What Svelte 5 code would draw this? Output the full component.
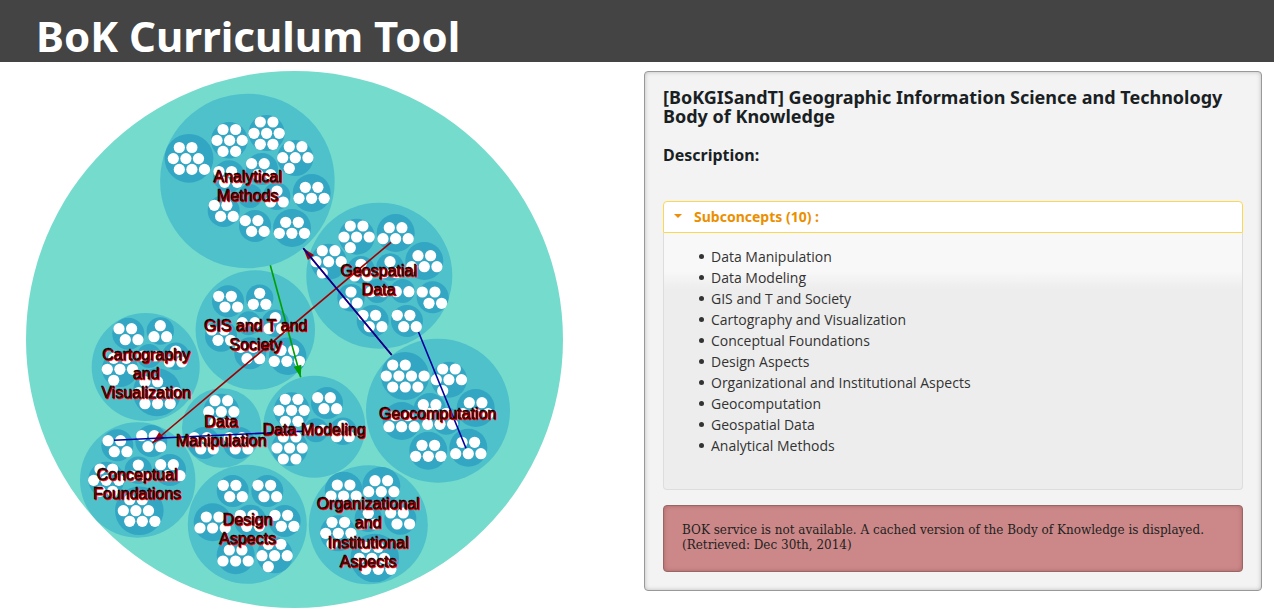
<script>
  let open = $state(true);

  const STEP = 12.6;

  // Each concept: centre, radius, label lines with the first baseline,
  // and its children as [x, y, r, rows]; a row is [x of first dot, y, count].
  const concepts = [
    { x: 247.4, y: 181, r: 87.3, lx: 247.5, ly: 181.5, label: ['Analytical', 'Methods'], subs: [
      [189, 158.3, 24.4, [[179.3, 147.5, 2], [173.3, 158.6, 3], [179.3, 169.4, 3]]],
      [229.3, 140.3, 18.3, [[223, 129.5, 2], [217, 140.4, 3], [223, 151.4, 2]]],
      [266.6, 133, 18, [[260.3, 122, 2], [254, 133.3, 3], [260.3, 144.3, 2]]],
      [295.3, 158, 18, [[289.3, 146.7, 2], [282.7, 157.7, 3], [289.3, 168.3, 1]]],
      [311.7, 193, 19, [[305.3, 187.3, 2], [299, 198.3, 3]]],
      [292, 228, 19, [[285.7, 222.3, 2], [279.3, 233.3, 3]]],
      [255, 226, 16, [[245.3, 220.6, 2], [251.6, 231.4, 2]]],
      [223.7, 211, 16, [[214.3, 205.3, 2], [220.6, 216.4, 2]]],
      [229, 176.3, 16, [[219, 171.5, 2], [224.6, 182.3, 2]]],
      [262, 169, 16, [[251.6, 163.6, 2], [258, 174.5, 2]]],
      [276.7, 196.3, 13.7, [[277, 191, 1], [270.6, 202, 2]]],
      [250, 196, 12, []]
    ] },
    { x: 255.3, y: 330, r: 59.7, lx: 255.5, ly: 330.5, label: ['GIS and T and', 'Society'], subs: [
      [228, 301.3, 16, [[218.7, 296.3, 2], [225, 307, 2]]],
      [259.7, 298.3, 13.7, [[259.7, 293.3, 1], [253.3, 304.3, 2]]],
      [275.3, 323.3, 13.7, [[275.3, 317.7, 1], [269, 328.7, 2]]],
      [248.7, 323.3, 12, [[242.3, 322.7, 2]]],
      [221, 335.7, 16, [[211.7, 330, 2], [218, 340.3, 2]]],
      [250.3, 353.3, 16, [[240.7, 347.3, 2], [247, 358.7, 2]]],
      [287.7, 356.3, 18.7, [[281, 350.3, 2], [274.3, 361.3, 3]]]
    ] },
    { x: 379.3, y: 275.7, r: 73, lx: 378.5, ly: 276, label: ['Geospatial', 'Data'], subs: [
      [356.7, 236.7, 18, [[350.3, 226, 2], [344, 237, 3], [350.3, 247.7, 1]]],
      [395.7, 233, 19, [[389.3, 227.7, 2], [383, 238.7, 3]]],
      [424.3, 261, 19, [[418, 255.7, 2], [411.7, 266.7, 3]]],
      [328.7, 261.7, 18, [[322.3, 250.7, 2], [316, 261.7, 3], [322.3, 273, 1]]],
      [432.7, 297.3, 16, [[422.3, 292, 2], [429, 303.3, 2]]],
      [407, 321, 16, [[397.3, 315.3, 2], [403.7, 326.7, 2]]],
      [372.7, 321, 16, [[363, 315.3, 2], [369.3, 326.7, 2]]],
      [351, 297.7, 13.7, [[351, 292, 1], [344.7, 303, 2]]],
      [361, 269.7, 13.7, [[361, 264.3, 1], [354.7, 276, 2]]],
      [390, 267, 13.7, [[390, 261.7, 1], [383.7, 272.7, 2]]],
      [402.7, 291, 12, [[396.3, 291.7, 2]]],
      [377.3, 291, 12, [[371, 291.7, 2]]]
    ] },
    { x: 145.7, y: 367, r: 54, lx: 146, ly: 359.5, label: ['Cartography', 'and', 'Visualization'], subs: [
      [128.3, 333.7, 16, [[119, 328.7, 2], [125.3, 339.7, 2]]],
      [160.3, 331, 13.7, [[160.3, 325.7, 1], [154, 336.7, 2]]],
      [175.7, 356.3, 13.7, [[175.7, 351, 1], [169.3, 362, 2]]],
      [149, 356, 12, [[142.7, 356, 2]]],
      [120, 369, 18, [[113.7, 358.3, 2], [107.3, 369.3, 3], [113.7, 380.3, 1]]],
      [157, 392.3, 24, [[145, 381.7, 2], [138.7, 392.7, 4], [145, 403.7, 3]]]
    ] },
    { x: 438, y: 410.7, r: 72, lx: 437.5, ly: 419, label: ['Geocomputation'], subs: [
      [405, 376, 24, [[392.7, 365, 2], [386.3, 376, 4], [392.7, 387, 3]]],
      [449, 379.7, 18, [[442.7, 369, 2], [436.3, 379.7, 3], [442.7, 390.7, 1]]],
      [475.7, 408, 19, [[469.3, 402.7, 2], [463, 413.7, 3]]],
      [468.3, 447.7, 19, [[462, 442.3, 2], [455.7, 453.7, 3]]],
      [428.3, 450.7, 19, [[422, 445.3, 2], [415.7, 456.3, 3]]],
      [401.7, 421, 19, [[395.3, 415.7, 2], [389, 426.7, 3]]],
      [429.7, 409, 16, [[423.3, 404.7, 2], [429.6, 413.3, 2], [427.7, 424.3, 1]]],
      [446.3, 421, 13.7, [[446.3, 413.3, 1], [440, 424.3, 2]]]
    ] },
    { x: 221.7, y: 428, r: 39.7, lx: 221, ly: 427, label: ['Data', 'Manipulation'], subs: [
      [221.3, 411.7, 18, [[215, 400.7, 2], [208.7, 411.7, 3], [215, 422.7, 2]]],
      [204, 443, 16, [[194.3, 437.7, 2], [200.7, 449, 2]]],
      [239, 443, 16, [[229.3, 437.7, 2], [235.3, 449, 2]]]
    ] },
    { x: 314.3, y: 426.7, r: 51, lx: 314, ly: 435, label: ['Data Modeling'], subs: [
      [291.7, 410.3, 18, [[285.3, 399.3, 2], [279, 410.3, 3], [285.3, 421.3, 2]]],
      [327, 403, 16, [[317.7, 397.7, 2], [324, 408.7, 2]]],
      [343, 431.3, 13.7, [[343, 425.5, 1], [336.7, 436.7, 2]]],
      [316, 430.3, 12, [[309.7, 430, 2]]],
      [289.7, 448, 18, [[283.3, 437, 2], [277, 448, 3], [283.3, 459, 2]]]
    ] },
    { x: 137.7, y: 480, r: 57.7, lx: 137, ly: 480, label: ['Conceptual', 'Foundations'], subs: [
      [117.3, 445.3, 16, [[108, 440.7, 2], [114.3, 451.7, 2]]],
      [151.3, 441, 16, [[141.7, 435.7, 2], [148, 446.7, 2]]],
      [138.3, 470.3, 13.7, [[138.3, 465, 1], [132, 476, 2]]],
      [170, 470, 16, [[160.7, 464.7, 2], [167.3, 475.7, 2]]],
      [106.3, 479.7, 18, [[100, 469, 2], [93.7, 480.3, 3], [100, 491.3, 2]]],
      [139.3, 510.7, 24.3, [[129.7, 499.7, 2], [123.3, 510.7, 3], [129.7, 521.3, 3]]]
    ] },
    { x: 247.3, y: 524.3, r: 59.5, lx: 247.5, ly: 525, label: ['Design', 'Aspects'], subs: [
      [232.7, 491, 16, [[223.3, 485.3, 2], [229.7, 496.7, 2]]],
      [267.3, 491, 16, [[258, 485.3, 2], [264, 496.7, 2]]],
      [212.7, 522.3, 19, [[206.3, 517, 2], [200, 528, 3]]],
      [284.7, 521, 16, [[275, 515.3, 2], [281.3, 526.3, 2]]],
      [250.3, 520.7, 16, [[240.3, 515.3, 2], [246.7, 526.3, 2]]],
      [235.7, 555.3, 19, [[229.3, 550, 2], [223, 561, 3]]],
      [274.7, 555.3, 18, [[268.3, 544.3, 2], [262, 555.7, 3], [268.3, 566.7, 1]]]
    ] },
    { x: 368.3, y: 524.7, r: 59.5, lx: 368, ly: 509, label: ['Organizational', 'and', 'Institutional', 'Aspects'], subs: [
      [343.7, 490.7, 19, [[337.3, 485, 2], [331, 496, 3]]],
      [381.3, 486, 19, [[375, 480.7, 2], [368.7, 491.7, 3]]],
      [400.3, 518.7, 16, [[390.7, 513, 2], [397, 524, 2]]],
      [368.3, 518.3, 13.7, [[368.3, 513.3, 1], [362, 524, 2]]],
      [338, 533.3, 18, [[332, 522.3, 2], [325.7, 533.3, 3], [332, 544, 1]]],
      [374.7, 558, 24.3, [[365.7, 547.3, 2], [359.3, 558.3, 3], [365.7, 569.3, 3]]]
    ] }
  ];

  const links = [
    { kind: 'similar', x1: 270.3, y1: 265.3, x2: 300.7, y2: 377.3, head: true },
    { kind: 'prereq', x1: 391, y1: 242.3, x2: 152.5, y2: 443, head: true },
    { kind: 'prereq', x1: 391.7, y1: 355, x2: 303.3, y2: 248.3, head: true },
    { kind: 'related', x1: 391.7, y1: 355, x2: 303.3, y2: 248.3 },
    { kind: 'related', x1: 418.5, y1: 332, x2: 466, y2: 448.3 },
    { kind: 'related', x1: 114, y1: 440.3, x2: 303, y2: 431.3 }
  ];

  function head({ x1, y1, x2, y2 }) {
    const d = Math.hypot(x2 - x1, y2 - y1);
    const ux = (x2 - x1) / d;
    const uy = (y2 - y1) / d;
    const bx = x2 - ux * 12;
    const by = y2 - uy * 12;
    return `${x2},${y2} ${bx - uy * 4},${by + ux * 4} ${bx + uy * 4},${by - ux * 4}`;
  }

  const subconcepts = [
    'Data Manipulation',
    'Data Modeling',
    'GIS and T and Society',
    'Cartography and Visualization',
    'Conceptual Foundations',
    'Design Aspects',
    'Organizational and Institutional Aspects',
    'Geocomputation',
    'Geospatial Data',
    'Analytical Methods'
  ];
</script>

<header>
  <h1>BoK Curriculum Tool</h1>
</header>

<main>
  <section class="graph">
    <svg viewBox="26 71 537 537">
      <circle class="root" cx="294.5" cy="339.5" r="268.5" />
      {#each concepts as c}
        <circle class="concept" cx={c.x} cy={c.y} r={c.r} />
      {/each}
      {#each concepts as c}
        {#each c.subs as [x, y, r, rows]}
          <circle class="sub" cx={x} cy={y} {r} />
          {#each rows as [rx, ry, n]}
            {#each { length: n } as _, i}
              <circle class="leaf" cx={rx + i * STEP} cy={ry} r="5.6" />
            {/each}
          {/each}
        {/each}
      {/each}
      {#each links as l}
        {#if l.head}
          <polygon class={['tip', l.kind]} points={head(l)} />
        {/if}
        <line class={l.kind} x1={l.x1} y1={l.y1} x2={l.x2} y2={l.y2} />
      {/each}
      {#each concepts as c}
        {#each c.label as line, i}
          <text x={c.lx} y={c.ly + i * 19.3}>{line}</text>
        {/each}
      {/each}
    </svg>
  </section>

  <section class="panel">
    <h2>[BoKGISandT] Geographic Information Science and Technology Body of Knowledge</h2>
    <h3>Description:</h3>

    <div class="accordion">
      <button type="button" aria-expanded={open} onclick={() => (open = !open)}>
        <svg class="caret" class:closed={!open} viewBox="0 0 8 4"><path d="M0 0h8L4 4z" /></svg>
        Subconcepts (10) :
      </button>
      {#if open}
        <ul>
          {#each subconcepts as name}
            <li>{name}</li>
          {/each}
        </ul>
      {/if}
    </div>

    <p class="notice">BOK service is not available. A cached version of the Body of Knowledge is displayed. (Retrieved: Dec 30th, 2014)</p>
  </section>
</main>

<style>
  :global(body) {
    background: #fff;
  }

  header {
    background: #444;
    padding: 6px 36px 0;
    height: 56px;
  }

  h1 {
    margin: 0;
    color: #fff;
    font: bold 42px/60px 'Noto Sans', sans-serif;
  }

  main {
    display: grid;
    grid-template-columns: 1fr 1fr;
    align-items: start;
    padding-top: 9px;
  }

  .graph {
    padding: 0 74px 0 26px;
  }

  .graph svg {
    display: block;
    width: 100%;
  }

  .root { fill: #75dbcd; }
  .concept { fill: #4fc1cb; }
  .sub { fill: #33a6c3; }
  .leaf { fill: #fff; }

  line { stroke-width: 1.6; }
  line.similar { stroke: #00a000; }
  line.prereq { stroke: #a00000; }
  line.related { stroke: #0000a0; }
  .tip.similar { fill: #00a000; }
  .tip.prereq { fill: #a00000; }

  text {
    font: 16px 'Liberation Sans', Arial, sans-serif;
    text-anchor: middle;
    fill: #000;
    stroke: #000;
    stroke-width: 0.5;
    text-shadow: 1px 1px 0 #f00;
  }

  .panel {
    margin: 0 12px 0 7px;
    padding: 16px 18px 18px;
    background: #f3f3f3;
    border: 1px solid #999;
    border-radius: 4px;
    box-shadow: inset 0 0 4px #bbb;
    color: #1a1f24;
    font-family: 'Noto Sans', sans-serif;
  }

  h2 {
    margin: 0;
    font-size: 18px;
    line-height: 19px;
  }

  h3 {
    margin: 19px 0 36px;
    font-size: 16px;
    line-height: 20px;
  }

  button {
    display: flex;
    align-items: center;
    gap: 12px;
    width: 100%;
    height: 32px;
    padding: 0 10px 2px;
    border: 1px solid #fbd850;
    border-radius: 4px 4px 0 0;
    background: #fff;
    color: #eb8f00;
    font: bold 14px 'Noto Sans', sans-serif;
    text-align: left;
    cursor: pointer;
  }

  .caret {
    width: 8px;
    height: 4px;
    fill: #ef8c08;
  }

  .caret.closed {
    transform: rotate(-90deg);
  }

  ul {
    margin: 0;
    padding: 13px 32px 33px 35px;
    border: 1px solid #ddd;
    border-top: 0;
    border-radius: 0 0 4px 4px;
    background: linear-gradient(#f8f8f8 38px, #ededed 56px);
    color: #333;
    font-family: 'Open Sans', sans-serif;
    font-size: 14px;
    line-height: 21px;
    list-style: none;
  }

  li {
    display: flex;
    align-items: center;
    gap: 7px;
  }

  li::before {
    content: '';
    width: 5px;
    height: 5px;
    border-radius: 50%;
    background: #333;
  }

  .notice {
    margin: 15px 0 0;
    padding: 17px 18px 18px;
    border: 1px solid #966;
    border-radius: 4px;
    background: #cc8888;
    box-shadow: inset 0 0 4px #a66;
    color: #222;
    font: 12px/15px 'DejaVu Serif', serif;
  }
</style>
